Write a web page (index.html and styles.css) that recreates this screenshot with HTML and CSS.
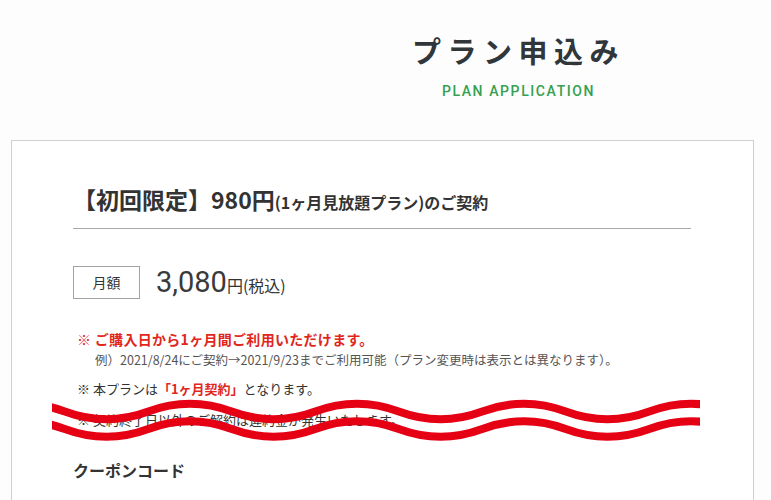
FILE: index.html
```html
<!DOCTYPE html>
<html lang="ja">
<head>
    <meta charset="UTF-8">
    <meta name="viewport" content="width=device-width, initial-scale=1.0">
    <title>プラン申込み</title>
    <link rel="stylesheet" href="styles.css">
</head>
<body>
    <!-- Page heading -->
    <div class="page-head">
        <h1>プラン申込み</h1>
        <p class="sub">PLAN APPLICATION</p>
    </div>

    <!-- Plan card -->
    <div class="plan-box">
        <h2 class="plan-title">【初回限定】980円<small>(1ヶ月見放題プラン)のご契約</small></h2>

        <div class="price-row">
            <div class="price-label">月額</div>
            <div class="price"><span class="num">3,080</span>円(税込)</div>
        </div>

        <ul class="notes">
            <li class="note red">※ ご購入日から1ヶ月間ご利用いただけます。</li>
            <li class="note example">例）2021/8/24にご契約→2021/9/23までご利用可能（プラン変更時は表示とは異なります）。</li>
            <li class="note gap">※ 本プランは<em>「1ヶ月契約」</em>となります。</li>
            <li class="note gap2">※ 契約終了日以外のご解約は違約金が発生いたします。</li>
        </ul>

        <h3 class="coupon">クーポンコード</h3>
    </div>

    <!-- red wavy marks laid over the last note -->
    <svg class="scribble" viewBox="52 390 648 60" width="648" height="60">
        <g fill="none" stroke="#e50014" stroke-width="8">
            <path d="M-18.75 411.5 Q23 396 64.75 411.5 T148.25 411.5 T231.75 411.5 T315.25 411.5 T398.75 411.5 T482.25 411.5 T565.75 411.5 T649.25 411.5 T732.75 411.5"/>
            <path d="M-18.75 411.5 Q23 396 64.75 411.5 T148.25 411.5 T231.75 411.5 T315.25 411.5 T398.75 411.5 T482.25 411.5 T565.75 411.5 T649.25 411.5 T732.75 411.5" transform="translate(0 17.5)"/>
        </g>
    </svg>
</body>
</html>
```

FILE: styles.css
```css
/* Basic reset */
* {
    margin: 0;
    padding: 0;
    box-sizing: border-box;
}

body {
    background: #fdfdfd;
    color: #333;
    font-family: "Noto Sans CJK JP", "Noto Sans", sans-serif;
    width: 771px;
    height: 500px;
    overflow: hidden;
}

/* Heading */
.page-head {
    padding: 30px 0 0 266px;
    text-align: center;
}

h1 {
    font-size: 29px;
    line-height: 40px;
    font-weight: 700;
    letter-spacing: 6.5px;
    color: #30363a;
}

.sub {
    margin-top: 11px;
    font-family: Roboto, "Liberation Sans", sans-serif;
    font-size: 14px;
    line-height: 20px;
    font-weight: 500;
    letter-spacing: 1.6px;
    color: #35a04f;
}

/* Card */
.plan-box {
    margin: 39px 0 0 11px;
    width: 743px;
    height: 400px;
    padding: 41px 62px 0 61px;
    border: 1px solid #cfcfcf;
    background: #fff;
}

.plan-title {
    font-size: 23px;
    line-height: 34px;
    font-weight: 700;
    color: #333;
    padding-bottom: 9px;
    border-bottom: 1px solid #a9a9a9;
}

.plan-title small {
    font-size: 16px;
}

.price-row {
    display: flex;
    align-items: center;
    gap: 16px;
    margin-top: 36px;
}

.price-label {
    width: 67px;
    height: 33px;
    border: 1px solid #a3a3a3;
    font-size: 14px;
    line-height: 31px;
    text-align: center;
}

.price {
    font-size: 16px;
}

.price .num {
    font-family: Roboto, "Liberation Sans", sans-serif;
    font-size: 29px;
    color: #3a3a3a;
}

/* Notes */
.notes {
    list-style: none;
    margin-top: 29px;
    padding-left: 4px;
}

.note {
    font-size: 13px;
    line-height: 20px;
    color: #333;
}

.note.red {
    color: #e1261c;
    font-weight: 700;
    font-size: 14px;
    line-height: 22px;
    letter-spacing: 0.3px;
}

.note.example {
    padding-left: 18px;
    font-size: 12.5px;
    color: #555;
}

.note.gap {
    margin-top: 9px;
}

.note.gap2 {
    margin-top: 11px;
}

.note em {
    font-style: normal;
    font-weight: 700;
    color: #e1261c;
}

.coupon {
    margin-top: 28px;
    font-size: 16px;
    line-height: 24px;
    font-weight: 700;
}

/* Overlay marks */
.scribble {
    position: absolute;
    left: 52px;
    top: 390px;
}
```
